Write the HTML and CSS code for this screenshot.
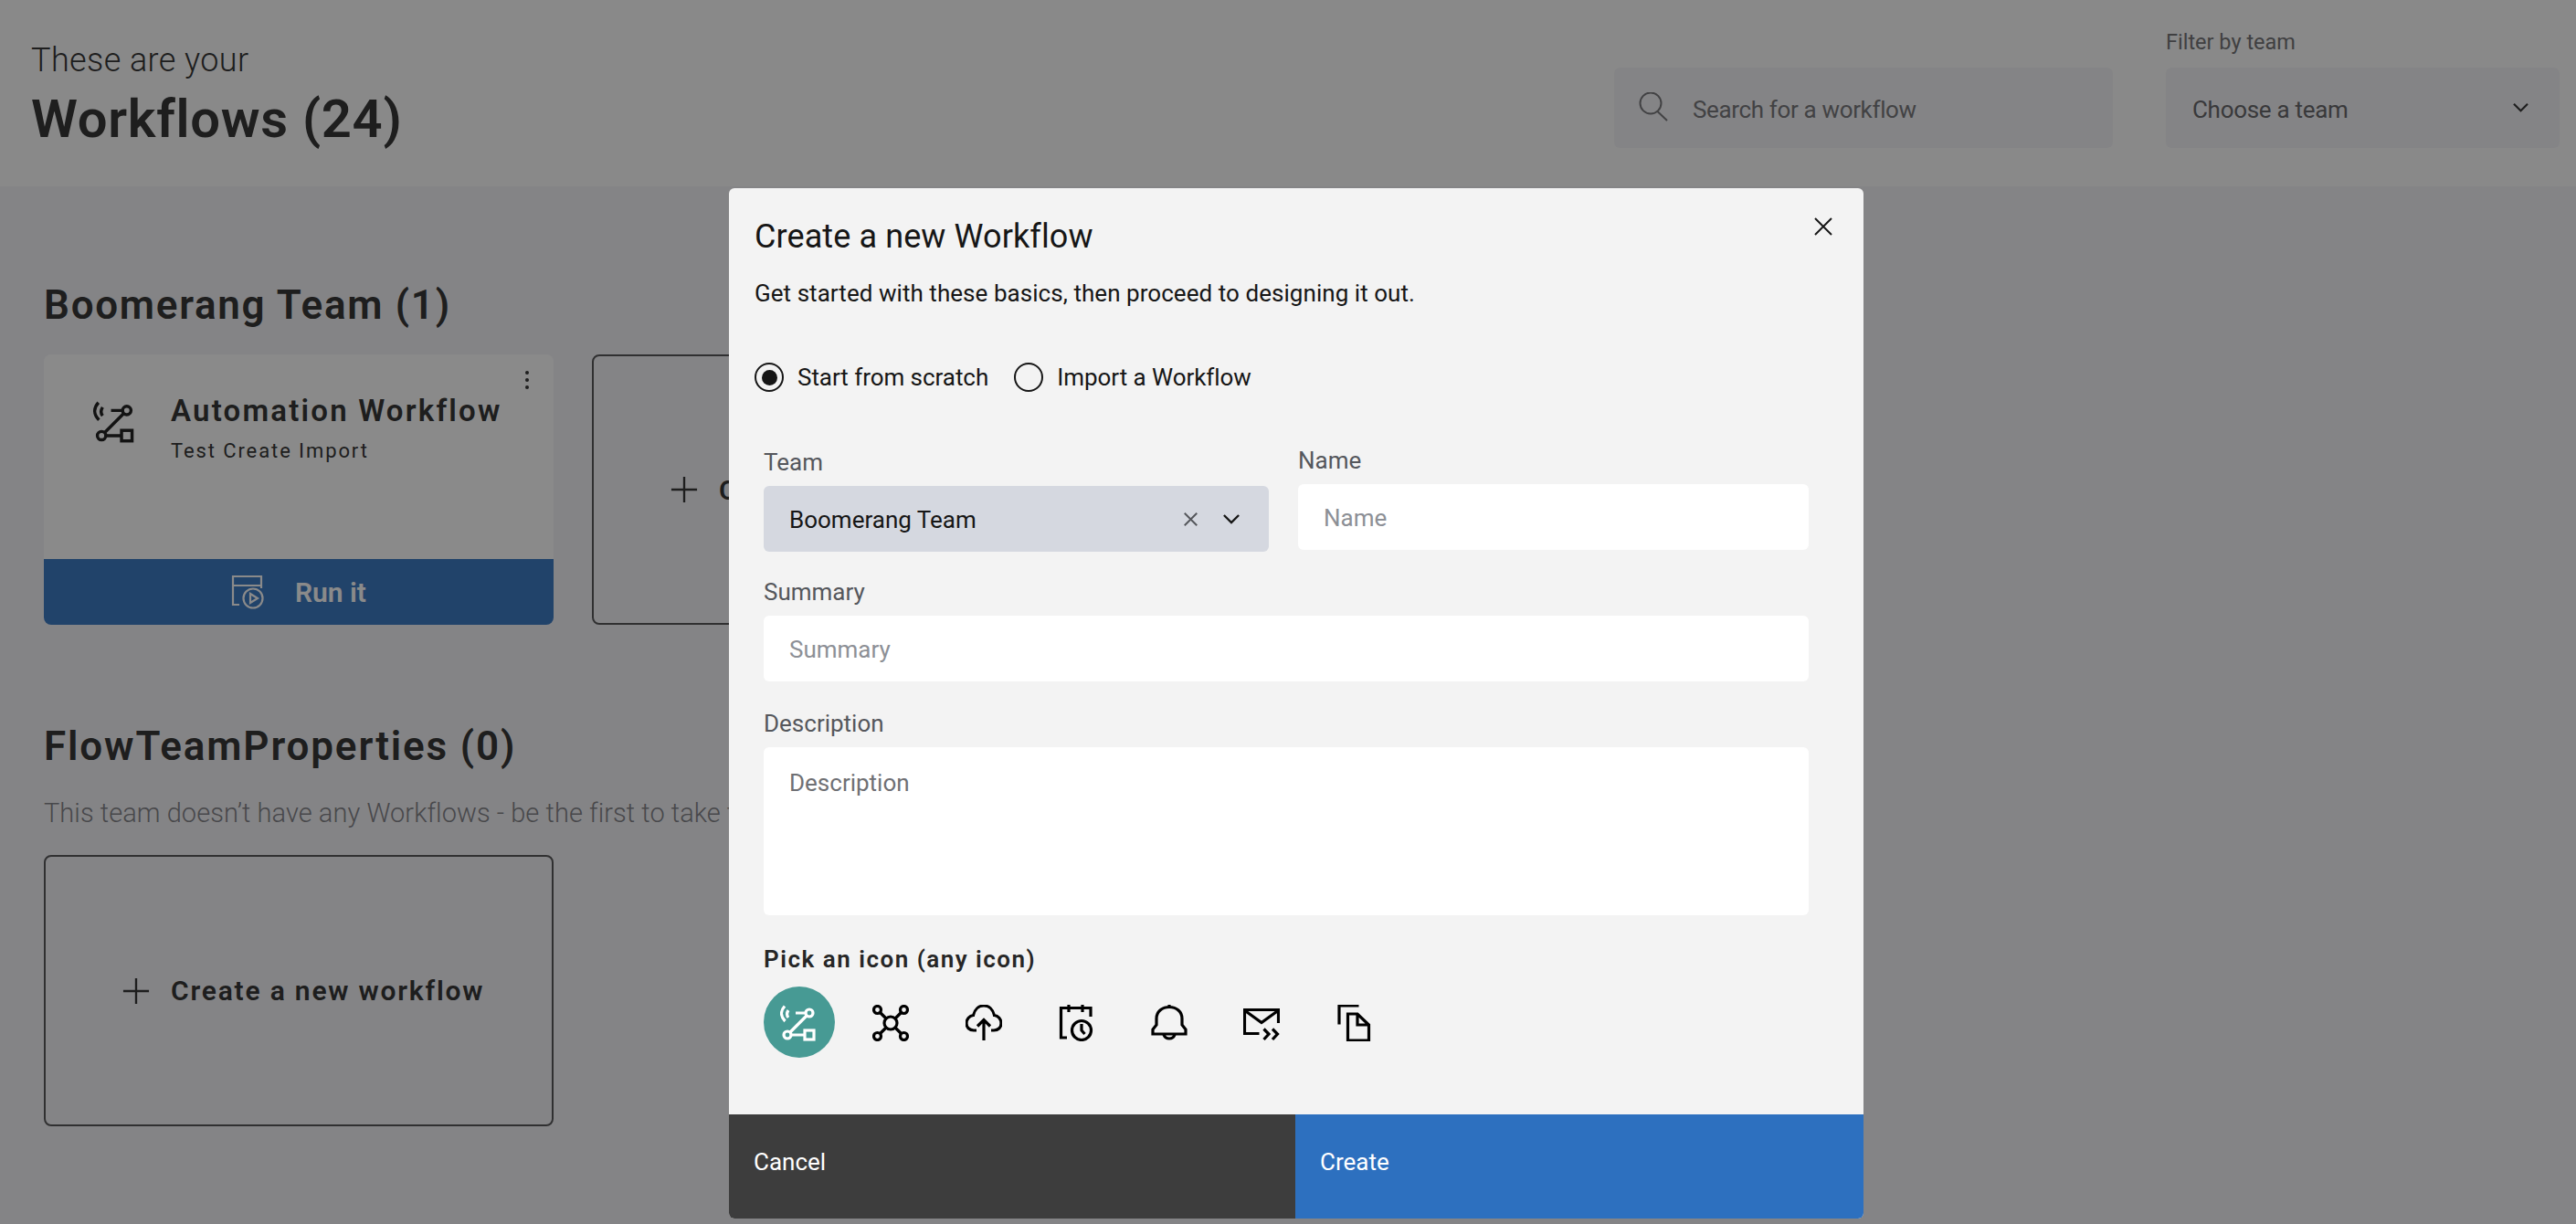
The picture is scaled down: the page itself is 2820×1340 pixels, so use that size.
FILE: index.html
```html
<!DOCTYPE html>
<html>
<head>
	<meta charset="UTF-8">
	<title>Workflows</title>
	<link rel="stylesheet" href="styles.css">
</head>
<body>
	<svg class="icon-defs" width="0" height="0">
		<symbol id="i-flow" viewBox="0 0 40 40">
			<circle cx="32" cy="9" r="4"/><circle cx="8" cy="33" r="4"/><rect x="27" y="28" width="10" height="10"/>
			<path d="M12 33H27M11 30L29 12M17 9H28M5 1.500C0 7 0.500 13 5.500 18M9 6C7 9 7 11.500 9 14"/>
		</symbol>
		<symbol id="i-network" viewBox="0 0 40 40">
			<circle cx="20" cy="20" r="7"/><circle cx="5.500" cy="5.500" r="4"/><circle cx="34.500" cy="5.500" r="4"/><circle cx="5.500" cy="34.500" r="4"/><circle cx="34.500" cy="34.500" r="4"/>
			<path d="M8.500 8.500L15 15M31.500 8.500L25 15M8.500 31.500L15 25M31.500 31.500L25 25"/>
		</symbol>
		<symbol id="i-cloud" viewBox="0 0 40 40">
			<path d="M12 28H9C4 28 1 24.500 1 20.500C1 15.500 4.500 12 8.500 11.500C10 5 14.500 1 20 1C25.500 1 30 5 31.500 11.500C35.500 12 39 15.500 39 20.500C39 24.500 36 28 31 28H28M20 39V17M13 23.500L20 16.500L27 23.500"/>
		</symbol>
		<symbol id="i-calendar" viewBox="-2 0 40 40">
			<path d="M8 36H1.500V3.500H34V13M10 0V8M25 0V8"/><circle cx="24" cy="28" r="10.500"/><path d="M24 21V28L27.500 32"/>
		</symbol>
		<symbol id="i-bell" viewBox="0 0 40 40">
			<path d="M20 2.500C12 2.500 6 7.500 6 15V22L2 27V32H38V27L34 22V15C34 7.500 28 2.500 20 2.500ZM20 0V3M14 33A6.500 6.500 0 0 0 26 33"/>
		</symbol>
		<symbol id="i-mail" viewBox="0 0 40 40">
			<path d="M17.500 31.500H1.500V5.500H38.500V20M2 6.500L20 19.500L38 6.500M22.500 26.500L28 32L22.500 38M32 26.500L37.500 32L32 38"/>
		</symbol>
		<symbol id="i-doc" viewBox="0 0 40 40">
			<path d="M24.500 1H3V21.500M12.500 10H23L35.500 22V39H12.500ZM23 10V22H35.500"/>
		</symbol>
		<symbol id="i-run" viewBox="0 0 40 40">
			<path d="M10 34H3V3H34V16M3 13H34"/><circle cx="25" cy="27" r="10.500"/><path d="M22 22L30 27L22 32Z"/>
		</symbol>
		<symbol id="i-plus" viewBox="0 0 32 32"><path d="M16 1V31M1 16H31"/></symbol>
		<symbol id="i-close" viewBox="0 0 20 20"><path d="M1 1L19 19M19 1L1 19"/></symbol>
		<symbol id="i-chevron" viewBox="0 0 20 12"><path d="M1 1L10 10L19 1"/></symbol>
		<symbol id="i-search" viewBox="0 0 32 32"><circle cx="13" cy="12" r="11.500"/><path d="M20.500 21L31 31"/></symbol>
	</svg>

	<header class="top">
		<div class="top-title">
			<p class="top-sub">These are your</p>
			<h1>Workflows (24)</h1>
		</div>
		<div class="top-controls">
			<div class="search-box">
				<svg class="search-icon stroke"><use href="#i-search"/></svg>
				<span>Search for a workflow</span>
			</div>
			<div class="filter">
				<label>Filter by team</label>
				<div class="filter-select">
					<span>Choose a team</span>
					<svg class="chev stroke"><use href="#i-chevron"/></svg>
				</div>
			</div>
		</div>
	</header>

	<main class="content">
		<section class="team team-first">
			<h2>Boomerang Team (1)</h2>
			<div class="cards">
				<div class="card">
					<div class="card-body">
						<svg class="card-icon stroke"><use href="#i-flow"/></svg>
						<div>
							<h3>Automation Workflow</h3>
							<p>Test Create Import</p>
						</div>
						<div class="kebab"><i></i><i></i><i></i></div>
					</div>
					<div class="run-bar">
						<svg class="run-icon stroke"><use href="#i-run"/></svg>
						<span>Run it</span>
					</div>
				</div>
				<div class="new-card">
					<svg class="plus stroke"><use href="#i-plus"/></svg>
					<span>Create a new workflow</span>
				</div>
			</div>
		</section>
		<section class="team team-second">
			<h2>FlowTeamProperties (0)</h2>
			<p class="empty">This team doesn’t have any Workflows - be the first to take the</p>
			<div class="new-card">
				<svg class="plus stroke"><use href="#i-plus"/></svg>
				<span>Create a new workflow</span>
			</div>
		</section>
	</main>

	<div class="overlay">
		<div class="modal">
			<div class="modal-main">
				<svg class="close stroke"><use href="#i-close"/></svg>
				<h2 class="modal-title">Create a new Workflow</h2>
				<p class="modal-desc">Get started with these basics, then proceed to designing it out.</p>
				<div class="radios">
					<span class="radio radio-on"></span><span class="radio-label">Start from scratch</span>
					<span class="radio"></span><span class="radio-label">Import a Workflow</span>
				</div>
				<div class="form">
					<div class="row">
						<div class="field field-team">
							<label>Team</label>
							<div class="team-select">
								<span>Boomerang Team</span>
								<svg class="x stroke"><use href="#i-close"/></svg>
								<svg class="chev-dark stroke"><use href="#i-chevron"/></svg>
							</div>
						</div>
						<div class="field field-name">
							<label>Name</label>
							<div class="input">Name</div>
						</div>
					</div>
					<div class="field">
						<label>Summary</label>
						<div class="input">Summary</div>
					</div>
					<div class="field field-desc">
						<label>Description</label>
						<div class="input textarea">Description</div>
					</div>
					<p class="pick-label">Pick an icon (any icon)</p>
					<div class="pick-row">
						<span class="pick pick-on"><svg class="stroke"><use href="#i-flow"/></svg></span>
						<span class="pick"><svg class="stroke"><use href="#i-network"/></svg></span>
						<span class="pick"><svg class="stroke"><use href="#i-cloud"/></svg></span>
						<span class="pick"><svg class="stroke"><use href="#i-calendar"/></svg></span>
						<span class="pick"><svg class="stroke"><use href="#i-bell"/></svg></span>
						<span class="pick"><svg class="stroke"><use href="#i-mail"/></svg></span>
						<span class="pick"><svg class="stroke"><use href="#i-doc"/></svg></span>
					</div>
				</div>
			</div>
			<div class="modal-foot">
				<button class="btn-cancel">Cancel</button>
				<button class="btn-create">Create</button>
			</div>
		</div>
	</div>
</body>
</html>
```

FILE: styles.css
```css
* {
	box-sizing: border-box;
}
html, body {
	height: 100%;
}
body {
	margin: 0;
	background-color: #f3f3f7;
	font-family: Roboto, "Noto Sans", sans-serif;
	color: #262626;
	overflow: hidden;
}
h1, h2, h3, p {
	margin: 0;
	font-weight: 400;
}
.icon-defs {
	position: absolute;
}
.stroke {
	fill: none;
	stroke: currentColor;
	stroke-width: 2.6;
	display: block;
	flex: none;
}

/* top bar */
.top {
	height: 204px;
	background-color: #fdfdfd;
	display: flex;
	justify-content: space-between;
	padding: 0 18px 0 34px;
}
.top-sub {
	margin-top: 45px;
	font-size: 36px;
	line-height: 42px;
	font-weight: 300;
	letter-spacing: 0.4px;
}
.top h1 {
	margin-top: 9px;
	font-size: 58px;
	line-height: 68px;
	font-weight: 600;
	letter-spacing: 0.7px;
}
.top-controls {
	display: flex;
	gap: 58px;
	padding-top: 74px;
}
.search-box {
	width: 546px;
	height: 88px;
	background-color: #f3f3f7;
	border-radius: 6px;
	display: flex;
	align-items: center;
	padding: 3px 0 0 27px;
	font-size: 26px;
	letter-spacing: -0.35px;
	color: #6f6f72;
}
.search-icon {
	width: 32px;
	height: 32px;
	margin-right: 27px;
	stroke-width: 2;
	margin-top: -6px;
}
.filter {
	position: relative;
	width: 431px;
}
.filter label {
	position: absolute;
	left: 0;
	top: -42px;
	font-size: 23.500px;
	line-height: 28px;
	color: #6a6a6d;
}
.filter-select {
	height: 88px;
	background-color: #f3f3f7;
	border-radius: 6px;
	display: flex;
	align-items: center;
	justify-content: space-between;
	padding: 0 34px 0 29px;
	font-size: 26px;
	letter-spacing: -0.3px;
	color: #5c5c60;
}
.filter-select span {
	padding-top: 3px;
}
.chev {
	width: 17px;
	height: 10px;
	color: #262626;
}

/* teams */
.content {
	padding: 0 48px;
}
.team h2 {
	font-size: 44px;
	line-height: 52px;
	font-weight: 600;
	letter-spacing: 1.700px;
}
.team-first {
	padding-top: 104px;
}
.team-second {
	padding-top: 107px;
}
.team-second h2 {
	letter-spacing: 1.850px;
}
.cards {
	display: flex;
	gap: 42px;
	margin-top: 28px;
}
.card {
	width: 558px;
	height: 296px;
	background-color: #fff;
	border-radius: 8px;
	overflow: hidden;
	display: flex;
	flex-direction: column;
}
.card-body {
	flex: 1;
	position: relative;
	display: flex;
	padding: 50px 0 0 54px;
	gap: 39px;
}
.card-icon {
	width: 46px;
	height: 48px;
	stroke-width: 3;
	color: #111;
}
.card h3 {
	font-size: 33px;
	line-height: 38px;
	font-weight: 600;
	letter-spacing: 2.200px;
	margin-top: -7px;
}
.card p {
	font-size: 22px;
	line-height: 28px;
	letter-spacing: 1.900px;
	margin-top: 11px;
}
.kebab {
	position: absolute;
	right: 27px;
	top: 18px;
	display: flex;
	flex-direction: column;
	gap: 4px;
}
.kebab i {
	width: 4px;
	height: 4px;
	border-radius: 50%;
	background-color: #262626;
}
.run-bar {
	height: 72px;
	background-color: #2d70bf;
	color: #fff;
	display: flex;
	align-items: center;
	padding-left: 204px;
	gap: 31px;
	font-size: 30px;
	font-weight: 600;
}
.run-icon {
	width: 40px;
	height: 40px;
	stroke-width: 2.2;
}
.new-card {
	width: 558px;
	height: 296px;
	border: 2px solid #4a4a4c;
	border-radius: 8px;
	display: flex;
	align-items: center;
	padding-left: 84px;
	gap: 23px;
	font-size: 30px;
	font-weight: 600;
	letter-spacing: 1.800px;
}
.plus {
	width: 30px;
	height: 30px;
	stroke-width: 2.500;
}
.empty {
	margin-top: 29px;
	font-size: 29px;
	line-height: 36px;
	font-weight: 300;
	letter-spacing: 0.05px;
	color: #7a7a80;
}
.team-second .new-card {
	height: 297px;
	margin-top: 28px;
}

/* modal */
.overlay {
	position: absolute;
	left: 0;
	top: 0;
	right: 0;
	bottom: 0;
	background-color: rgba(22, 22, 22, 0.5);
}
.modal {
	position: absolute;
	left: 798px;
	top: 206px;
	width: 1242px;
	height: 1128px;
	background-color: #f3f3f3;
	border-radius: 6px;
	overflow: hidden;
	display: flex;
	flex-direction: column;
	color: #161616;
}
.modal-main {
	flex: 1;
	position: relative;
	padding: 28px 60px 0 28px;
}
.close {
	position: absolute;
	right: 34px;
	top: 32px;
	width: 20px;
	height: 20px;
	stroke-width: 2;
}
.modal-title {
	font-size: 36px;
	line-height: 50px;
	letter-spacing: 0.1px;
}
.modal-desc {
	margin-top: 19px;
	font-size: 26px;
	line-height: 36px;
	letter-spacing: 0.05px;
}
.radios {
	display: flex;
	align-items: center;
	margin-top: 58px;
	font-size: 26px;
}
.radio {
	width: 32px;
	height: 32px;
	border: 2.500px solid #161616;
	border-radius: 50%;
	margin-right: 15px;
	display: flex;
	align-items: center;
	justify-content: center;
}
.radio-on::after {
	content: "";
	width: 17px;
	height: 17px;
	border-radius: 50%;
	background-color: #161616;
}
.radio-label {
	margin-right: 28px;
	letter-spacing: -0.05px;
}
.form {
	padding-left: 10px;
	margin-top: 57px;
}
.row {
	display: flex;
	gap: 32px;
}
.field label {
	display: block;
	font-size: 26px;
	line-height: 36px;
	color: #55575c;
	margin-bottom: 8px;
}
.field {
	margin-bottom: 26px;
}
.field-team {
	width: 553px;
	margin-top: 2px;
}
.field-name {
	flex: 1;
}
.field-desc {
	margin-top: 28px;
	margin-bottom: 32px;
}
.team-select {
	height: 72px;
	background-color: #d5d8e0;
	border-radius: 6px;
	display: flex;
	align-items: center;
	padding: 0 32px 0 28px;
	font-size: 26px;
}
.team-select span {
	flex: 1;
	padding-top: 2px;
}
.x {
	width: 15px;
	height: 15px;
	color: #55575c;
	margin-right: 28px;
}
.chev-dark {
	width: 18px;
	height: 11px;
}
.input {
	height: 72px;
	background-color: #fff;
	border-radius: 6px;
	display: flex;
	align-items: center;
	padding: 2px 0 0 28px;
	font-size: 26px;
	color: #8d9096;
}
.textarea {
	height: 184px;
	align-items: flex-start;
	padding-top: 24px;
	color: #6f7074;
}
.pick-label {
	font-size: 26px;
	line-height: 32px;
	font-weight: 600;
	letter-spacing: 1.500px;
	color: #262626;
}
.pick-row {
	display: flex;
	margin-top: 14px;
	gap: 23.500px;
}
.pick {
	width: 78px;
	height: 78px;
	border-radius: 50%;
	display: flex;
	align-items: center;
	justify-content: center;
	color: #000;
}
.pick svg {
	width: 40px;
	height: 40px;
	stroke-width: 3.200;
	margin: 2px 0 0 -3px;
}
.pick-on {
	background-color: #479a94;
	color: #fff;
}
.modal-foot {
	height: 114px;
	display: flex;
}
.modal-foot button {
	border: 0;
	font: inherit;
	font-size: 26px;
	color: #fff;
	text-align: left;
	padding: 0 0 10px 27px;
	height: 100%;
}
.btn-cancel {
	width: 620px;
	background-color: #3d3d3d;
}
.btn-create {
	flex: 1;
	background-color: #2d70bf;
}
```
